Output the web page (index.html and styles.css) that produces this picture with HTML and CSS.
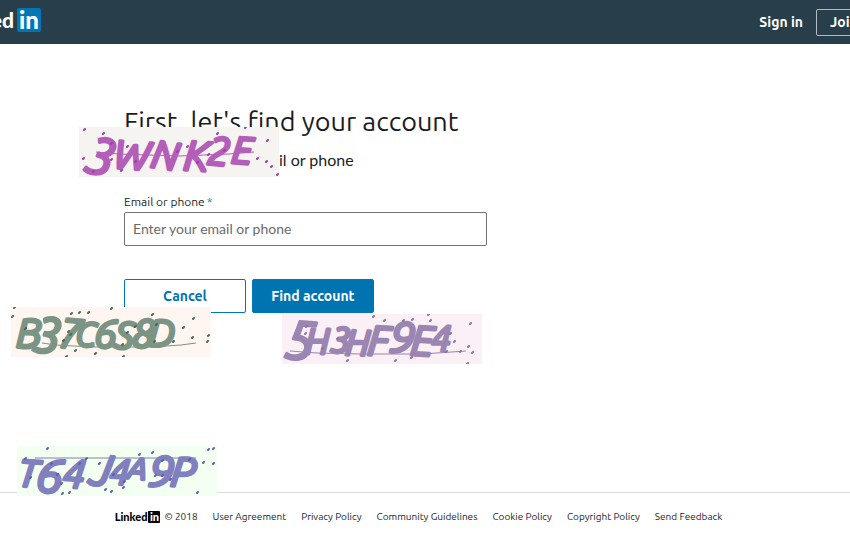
FILE: index.html
```
<!DOCTYPE html>
<html lang="en">
<head>
<meta charset="utf-8">
<title>Find your account | LinkedIn</title>
<link rel="stylesheet" href="styles.css">
</head>
<body>
<header class="topbar">
  <div class="topbar-inner">
    <a class="brand" href="#" aria-label="LinkedIn">
      <span class="brand-word">Linked</span>
      <span class="brand-box">in</span>
    </a>
    <nav class="actions">
      <a class="signin" href="#">Sign in</a>
      <a class="join" href="#">Join now</a>
    </nav>
  </div>
</header>

<main class="content">
  <h1>First, let's find your account</h1>
  <p class="lead">Please enter your email or phone</p>
  <form>
    <label for="account">Email or phone<span class="required">*</span></label>
    <input id="account" type="text" placeholder="Enter your email or phone">
    <div class="buttons">
      <button class="button secondary" type="button">Cancel</button>
      <button class="button primary" type="submit">Find account</button>
    </div>
  </form>
</main>

<footer class="footer">
  <div class="copyright"><span class="mini-brand">Linked<span class="mini-box">in</span></span> © 2018</div>
  <a href="#">User Agreement</a>
  <a href="#">Privacy Policy</a>
  <a href="#">Community Guidelines</a>
  <a href="#">Cookie Policy</a>
  <a href="#">Copyright Policy</a>
  <a href="#">Send Feedback</a>
</footer>

<svg class="tile tile-purple" viewBox="0 0 200 50">
  <g class="glyphs">
    <text font-size="52" transform="translate(4 44) rotate(12)">3</text>
    <text font-size="40" transform="translate(34 41) rotate(4)">W</text>
    <text font-size="39" transform="translate(71 40) rotate(8)">N</text>
    <text font-size="42" transform="translate(104 43) rotate(3)">K</text>
    <text font-size="40" transform="translate(127 37) rotate(6)">2</text>
    <text font-size="38" transform="translate(152 36) rotate(4)">E</text>
  </g>
  <path class="line" d="M17 25L40 27L100 29L150 27L175 25"/>
  <path class="dots" d="M5 3l1-1M24 7l1-1M32 17l1-1M4 32l1-1M32 33l1-1M48 20l1-1M56 35l1-1M42 44l1-1M98 25l1-1M108 20l1-1M129 28l1-1M138 7l1-1M166 1l1-1M188 14l1-1M178 32l1-1M187 35l1-1M192 40l1-1M198 48l1-1M118 36l1-1M145 24l1-1M14 45l1-1"/>
</svg>
<svg class="tile tile-green" viewBox="0 0 200 50">
  <g class="glyphs">
    <text font-size="42" transform="translate(5 41)">B</text>
    <text font-size="50" transform="translate(21 44) rotate(6)">3</text>
    <text font-size="42" transform="translate(46 40) rotate(5)">7</text>
    <text font-size="34" transform="translate(64 39) rotate(2)">C</text>
    <text font-size="40" transform="translate(83 40) rotate(3)">6</text>
    <text font-size="38" transform="translate(103 41) rotate(4)">S</text>
    <text font-size="40" transform="translate(121 40) rotate(2)">8</text>
    <text font-size="38" transform="translate(137 39) rotate(2)">D</text>
  </g>
  <path class="line" d="M31 36L45 38L80 40L140 40L170 38L185 36"/>
  <path class="dots" d="M3 1l1-1M1 10l1-1M14 22l1-1M60 7l1-1M68 6l1-1M77 6l1-1M100 2l1-1M57 25l1-1M59 28l1-1M52 34l1-1M64 44l1-1M84 47l1-1M55 50l1-1M112 50l1-1M111 38l1-1M116 26l1-1M124 20l1-1M141 8l1-1M143 35l1-1M162 35l1-1M172 21l1-1M182 12l1-1M181 31l1-1M197 29l1-1M196 35l1-1M145 18l1-1"/>
</svg>
<svg class="tile tile-plum" viewBox="0 0 200 50">
  <g class="glyphs">
    <text font-size="54" transform="translate(2 44) rotate(4)">5</text>
    <text font-size="36" transform="translate(23 40)">H</text>
    <text font-size="36" transform="translate(48 38) rotate(3)">3</text>
    <text font-size="36" transform="translate(63 41) rotate(2)">H</text>
    <text font-size="42" transform="translate(85 41) rotate(3)">F</text>
    <text font-size="44" transform="translate(107 38) rotate(5)">9</text>
    <text font-size="42" transform="translate(128 41) rotate(3)">E</text>
    <text font-size="36" transform="translate(149 37)">4</text>
  </g>
  <path class="line" d="M8 37L35 39L80 40L140 40L184 37"/>
  <path class="dots" d="M24 13l1-1M23 20l1-1M91 3l1-1M102 7l1-1M121 7l1-1M130 6l1-1M148 7l1-1M146 1l1-1M168 20l1-1M172 28l1-1M188 10l1-1M186 33l1-1M190 39l1-1M178 38l1-1M185 50l1-1M65 47l1-1M113 47l1-1M129 44l1-1M164 38l1-1M55 25l1-1M40 35l1-1"/>
</svg>
<svg class="tile tile-blue" viewBox="0 0 200 50">
  <g class="glyphs">
    <text font-size="38" transform="translate(0 40) rotate(4)">T</text>
    <text font-size="48" transform="translate(18 45) rotate(6)">6</text>
    <text font-size="40" transform="translate(45 41) rotate(4)">4</text>
    <text font-size="44" transform="translate(72 38) rotate(8)">J</text>
    <text font-size="36" transform="translate(92 38) rotate(3)">4</text>
    <text font-size="30" transform="translate(110 32) rotate(6)">A</text>
    <text font-size="44" transform="translate(131 40) rotate(5)">9</text>
    <text font-size="42" transform="translate(153 40) rotate(4)">P</text>
  </g>
  <path class="line" d="M18 12H179"/>
  <path class="dots" d="M8 13l1-1M30 3l1-1M34 18l1-1M13 32l1-1M40 29l1-1M44 38l1-1M45 48l1-1M52 47l1-1M62 18l1-1M69 13l1-1M82 18l1-1M88 44l1-1M94 46l1-1M96 29l1-1M106 42l1-1M107 36l1-1M122 9l1-1M135 7l1-1M145 15l1-1M138 30l1-1M145 30l1-1M153 34l1-1M172 14l1-1M180 47l1-1M186 17l1-1M191 4l1-1M196 3l1-1M196 18l1-1"/>
</svg>
</body>
</html>
```

FILE: styles.css
```
* { box-sizing: border-box; }

body {
  min-height: 100vh;
  margin: 0;
  display: flex;
  flex-direction: column;
  position: relative;
  background: #fff;
  color: #1d1d1f;
  font-family: Ubuntu, "Noto Sans", sans-serif;
  font-size: 14px;
}

a { color: inherit; text-decoration: none; }

.topbar {
  height: 44px;
  overflow: hidden;
  background: #283e4a;
  color: #fff;
}

.topbar-inner {
  height: 100%;
  margin: 0 -64px;
  display: flex;
  align-items: center;
  justify-content: space-between;
}

.brand {
  width: 105px;
  margin-bottom: 4px;
  display: flex;
  justify-content: flex-end;
  align-items: center;
  gap: 3px;
  font: 900 24px/24px Lato, sans-serif;
}

.brand-word { font-size: 21px; }

.brand-box {
  width: 24px;
  height: 24px;
  border-radius: 2px;
  background: #0077b5;
  text-align: center;
}

.actions {
  display: flex;
  align-items: center;
  gap: 13px;
  font-size: 14px;
  font-weight: 600;
}

.join {
  width: 98px;
  padding: 0 13px;
  border: 1px solid #b4bcc1;
  border-radius: 2px;
  line-height: 25px;
}

.content {
  width: 100%;
  max-width: 487px;
  padding: 59px 0 0 124px;
  flex: 1;
}

h1 {
  margin: 0;
  font-size: 27px;
  font-weight: 400;
  line-height: 36px;
  white-space: nowrap;
}

.lead {
  margin: 9px 0 20px;
  font-family: Lato, sans-serif;
  font-size: 16px;
  line-height: 24px;
}

label {
  display: block;
  font-size: 12px;
  line-height: 20px;
}

.required { margin-left: 2px; color: #0077b5; }

input {
  display: block;
  width: 100%;
  height: 34px;
  padding: 0 8px 1px;
  border: 1px solid #737373;
  border-radius: 2px;
  font: 14px Lato, sans-serif;
}

input::placeholder { color: #6b6b6b; }

.buttons {
  margin-top: 33px;
  display: flex;
  gap: 6px;
}

.button {
  width: 122px;
  height: 34px;
  border: 1px solid #0077b5;
  border-radius: 2px;
  padding: 0;
  font: inherit;
  font-weight: 600;
}

.primary { background: #0073b1; color: #fff; }
.secondary { background: #fff; color: #0073b1; }

.footer {
  height: 48px;
  border-top: 1px solid #d9dcde;
  display: flex;
  align-items: center;
  justify-content: center;
  gap: 15px;
  padding: 0 13px 0 0;
  font-size: 10px;
  white-space: nowrap;
}

.copyright { display: flex; align-items: center; gap: 4px; }

.mini-brand {
  display: flex;
  align-items: center;
  gap: 1px;
  color: #000;
  font: 900 11px/12px Lato, sans-serif;
}

.mini-box {
  width: 12px;
  height: 12px;
  border-radius: 1px;
  background: #000;
  color: #fff;
  text-align: center;
}

.tile {
  position: absolute;
  width: 200px;
  height: 50px;
  overflow: hidden;
}

.tile-purple { left: 79px; top: 127px; background: #f6f4f0; color: #b35eb8; }
.tile-green { left: 11px; top: 307px; background: #fff6f2; color: #7c9484; }
.tile-plum { left: 282px; top: 314px; background: #faf0f5; color: #9b85b3; }
.tile-blue { left: 17px; top: 446px; background: #f3fff1; color: #7f80bd; }

.glyphs {
  fill: currentColor;
  stroke: currentColor;
  stroke-width: 3;
  stroke-linejoin: round;
  font-family: Ubuntu, "Noto Sans", sans-serif;
  font-style: italic;
}

.line { fill: none; stroke: currentColor; stroke-width: 1; }
.dots { fill: none; stroke-width: 2; stroke-linecap: round; }
.tile-purple .dots { stroke: #a03aac; }
.tile-green .dots { stroke: #446a57; }
.tile-plum .dots { stroke: #8b70ab; }
.tile-blue .dots { stroke: #595cb2; }
```
